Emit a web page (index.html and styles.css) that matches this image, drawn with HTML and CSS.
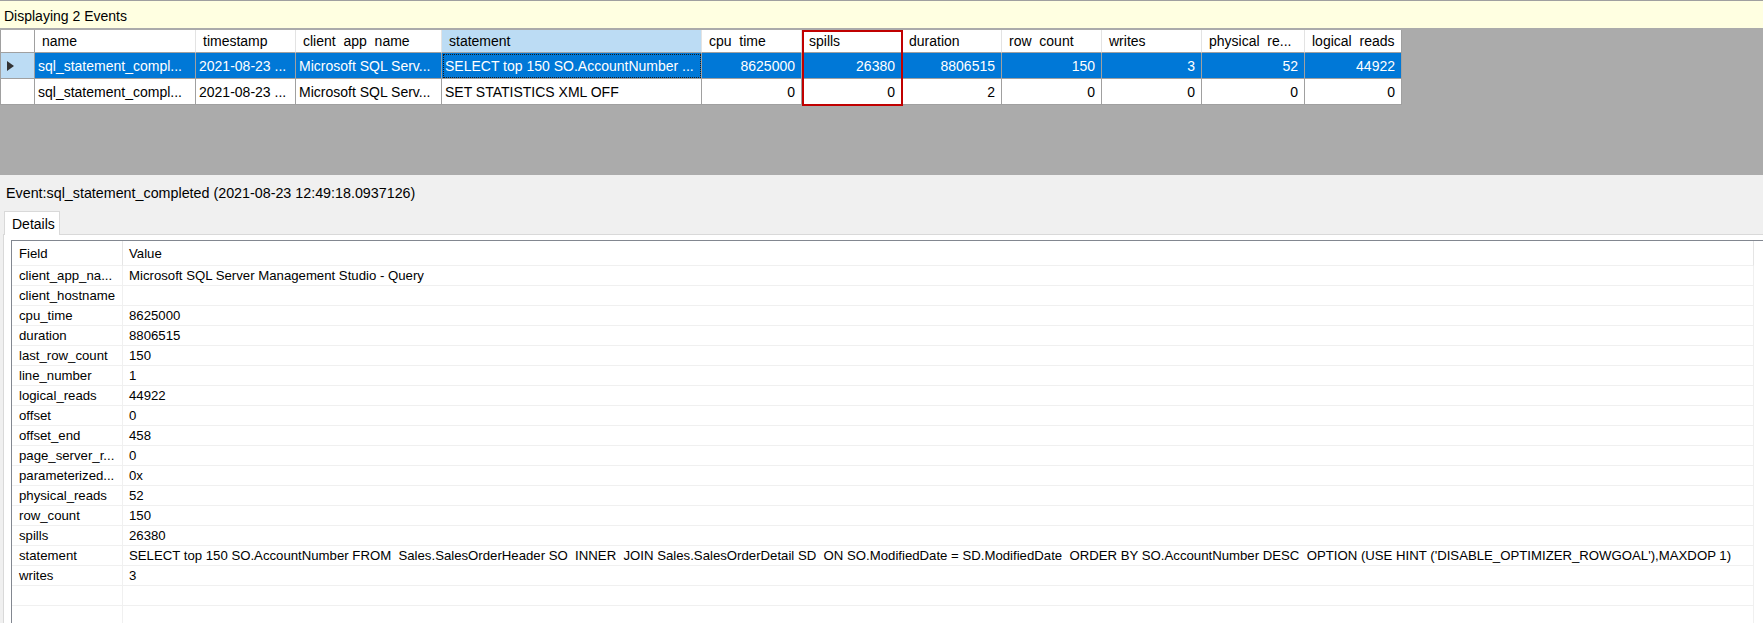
FILE: index.html
```html
<!DOCTYPE html>
<html>
<head>
<meta charset="utf-8">
<title>Displaying 2 Events</title>
<link rel="stylesheet" href="styles.css">
</head>
<body>
<div class="topbar">Displaying 2 Events</div>
<div class="gridarea">
  <div class="grid">
    <div class="cell hdr rh"></div>
    <div class="cell hdr">name</div>
    <div class="cell hdr">timestamp</div>
    <div class="cell hdr">client  app  name</div>
    <div class="cell hdr sorted">statement</div>
    <div class="cell hdr">cpu  time</div>
    <div class="cell hdr">spills</div>
    <div class="cell hdr">duration</div>
    <div class="cell hdr">row  count</div>
    <div class="cell hdr">writes</div>
    <div class="cell hdr">physical  re...</div>
    <div class="cell hdr">logical  reads</div>

    <div class="cell rh rh-sel"><svg class="arrow" width="7" height="10" viewBox="0 0 7 10"><polygon points="0,0 7,5 0,10" fill="#333"/></svg></div>
    <div class="cell sel">sql_statement_compl...</div>
    <div class="cell sel">2021-08-23 ...</div>
    <div class="cell sel">Microsoft SQL Serv...</div>
    <div class="cell sel focus">SELECT top 150 SO.AccountNumber ...</div>
    <div class="cell sel num">8625000</div>
    <div class="cell sel num">26380</div>
    <div class="cell sel num">8806515</div>
    <div class="cell sel num">150</div>
    <div class="cell sel num">3</div>
    <div class="cell sel num">52</div>
    <div class="cell sel num">44922</div>

    <div class="cell rh"></div>
    <div class="cell">sql_statement_compl...</div>
    <div class="cell">2021-08-23 ...</div>
    <div class="cell">Microsoft SQL Serv...</div>
    <div class="cell">SET STATISTICS XML OFF</div>
    <div class="cell num">0</div>
    <div class="cell num">0</div>
    <div class="cell num">2</div>
    <div class="cell num">0</div>
    <div class="cell num">0</div>
    <div class="cell num">0</div>
    <div class="cell num">0</div>
  </div>
  <div class="spill-mark"></div>
</div>

<div class="event">Event:sql_statement_completed (2021-08-23 12:49:18.0937126)</div>
<div class="tabs"><div class="tab">Details</div></div>
<div class="panel">
  <div class="list">
    <div class="lrow lhead"><div class="fcell">Field</div><div class="vcell">Value</div></div>
    <div class="lrow"><div class="fcell">client_app_na...</div><div class="vcell">Microsoft SQL Server Management Studio - Query</div></div>
    <div class="lrow"><div class="fcell">client_hostname</div><div class="vcell"></div></div>
    <div class="lrow"><div class="fcell">cpu_time</div><div class="vcell">8625000</div></div>
    <div class="lrow"><div class="fcell">duration</div><div class="vcell">8806515</div></div>
    <div class="lrow"><div class="fcell">last_row_count</div><div class="vcell">150</div></div>
    <div class="lrow"><div class="fcell">line_number</div><div class="vcell">1</div></div>
    <div class="lrow"><div class="fcell">logical_reads</div><div class="vcell">44922</div></div>
    <div class="lrow"><div class="fcell">offset</div><div class="vcell">0</div></div>
    <div class="lrow"><div class="fcell">offset_end</div><div class="vcell">458</div></div>
    <div class="lrow"><div class="fcell">page_server_r...</div><div class="vcell">0</div></div>
    <div class="lrow"><div class="fcell">parameterized...</div><div class="vcell">0x</div></div>
    <div class="lrow"><div class="fcell">physical_reads</div><div class="vcell">52</div></div>
    <div class="lrow"><div class="fcell">row_count</div><div class="vcell">150</div></div>
    <div class="lrow"><div class="fcell">spills</div><div class="vcell">26380</div></div>
    <div class="lrow"><div class="fcell">statement</div><div class="vcell">SELECT top 150 SO.AccountNumber FROM  Sales.SalesOrderHeader SO  INNER  JOIN Sales.SalesOrderDetail SD  ON SO.ModifiedDate = SD.ModifiedDate  ORDER BY SO.AccountNumber DESC  OPTION (USE HINT ('DISABLE_OPTIMIZER_ROWGOAL'),MAXDOP 1)</div></div>
    <div class="lrow"><div class="fcell">writes</div><div class="vcell">3</div></div>
    <div class="lrow"><div class="fcell"></div><div class="vcell"></div></div>
    <div class="lrow"><div class="fcell"></div><div class="vcell"></div></div>
  </div>
</div>
</body>
</html>
```

FILE: styles.css
```css
html, body {
  margin: 0;
  padding: 0;
}
body {
  width: 1763px;
  height: 623px;
  overflow: hidden;
  background: #f0f0f0;
  font-family: "Liberation Sans", Arial, sans-serif;
  font-size: 14px;
  color: #000;
}

.topbar {
  height: 28px;
  box-sizing: border-box;
  border-top: 1px solid #a0a0a0;
  background: #ffffe1;
  padding-left: 4px;
  padding-top: 2px;
  display: flex;
  align-items: center;
}

.gridarea {
  position: relative;
  height: 147px;
  box-sizing: border-box;
  padding-top: 2px;
  background: #ababab;
}

.grid {
  display: grid;
  grid-template-columns: 34px 161px 100px 146px 260px 100px 100px 100px 100px 100px 103px 97px;
  grid-template-rows: 23px 26px 26px;
  width: max-content;
  border-left: 1px solid #a0a0a0;
  background: #fff;
}

.cell {
  box-sizing: border-box;
  border-right: 1px solid #a0a0a0;
  border-bottom: 1px solid #a0a0a0;
  padding: 0 3px;
  display: flex;
  align-items: center;
  white-space: pre;
  overflow: hidden;
  background: #fff;
}

.hdr {
  padding-left: 7px;
  border-right-color: #e3e3e3;
  border-bottom-color: #a0a0a0;
}
.hdr:nth-child(12) {
  border-right-color: #a0a0a0;
}
.hdr.sorted {
  background: #bcdcf4;
}
.hdr.rh {
  border-right-color: #a0a0a0;
}

.rh-sel {
  background: #bcdcf4;
  padding-left: 6px;
}

.sel {
  background: #0078d7;
  color: #fff;
}
.focus {
  outline: 1px dotted #1a1a1a;
  outline-offset: -2px;
}

.num {
  justify-content: flex-end;
  padding-right: 6px;
}

.spill-mark {
  position: absolute;
  left: 802px;
  top: 2px;
  width: 101px;
  height: 76px;
  box-sizing: border-box;
  border: 2px solid #c00000;
}

.event {
  height: 36px;
  padding-left: 6px;
  font-size: 14.3px;
  display: flex;
  align-items: center;
}

.tabs {
  height: 23px;
  padding-left: 4px;
  display: flex;
  align-items: flex-end;
}
.tab {
  position: relative;
  z-index: 1;
  width: 56px;
  height: 24px;
  box-sizing: border-box;
  border: 1px solid #d9d9d9;
  border-bottom: none;
  background: #fff;
  padding-left: 7px;
  display: flex;
  align-items: center;
  margin-bottom: -1px;
}

.panel {
  margin-left: 3px;
  height: 400px;
  box-sizing: border-box;
  border: 1px solid #d9d9d9;
  border-right: none;
  background: #fff;
  padding: 5px 0 0 7px;
}

.list {
  border: 1px solid #828790;
  border-right: none;
  height: 400px;
  font-size: 13.2px;
  background: #fff;
}

.lrow {
  display: grid;
  grid-template-columns: 111px 1631px;
  height: 20px;
}
.lhead {
  height: 25px;
}

.fcell, .vcell {
  box-sizing: border-box;
  border-bottom: 1px solid #f0f0f0;
  border-right: 1px solid #f0f0f0;
  display: flex;
  align-items: center;
  white-space: pre;
  overflow: hidden;
}
.fcell {
  padding-left: 7px;
}
.vcell {
  padding-left: 6px;
}
.lhead .fcell, .lhead .vcell {
  border-bottom-color: #f0f0f0;
  border-right-color: #e5e5e5;
}
```
